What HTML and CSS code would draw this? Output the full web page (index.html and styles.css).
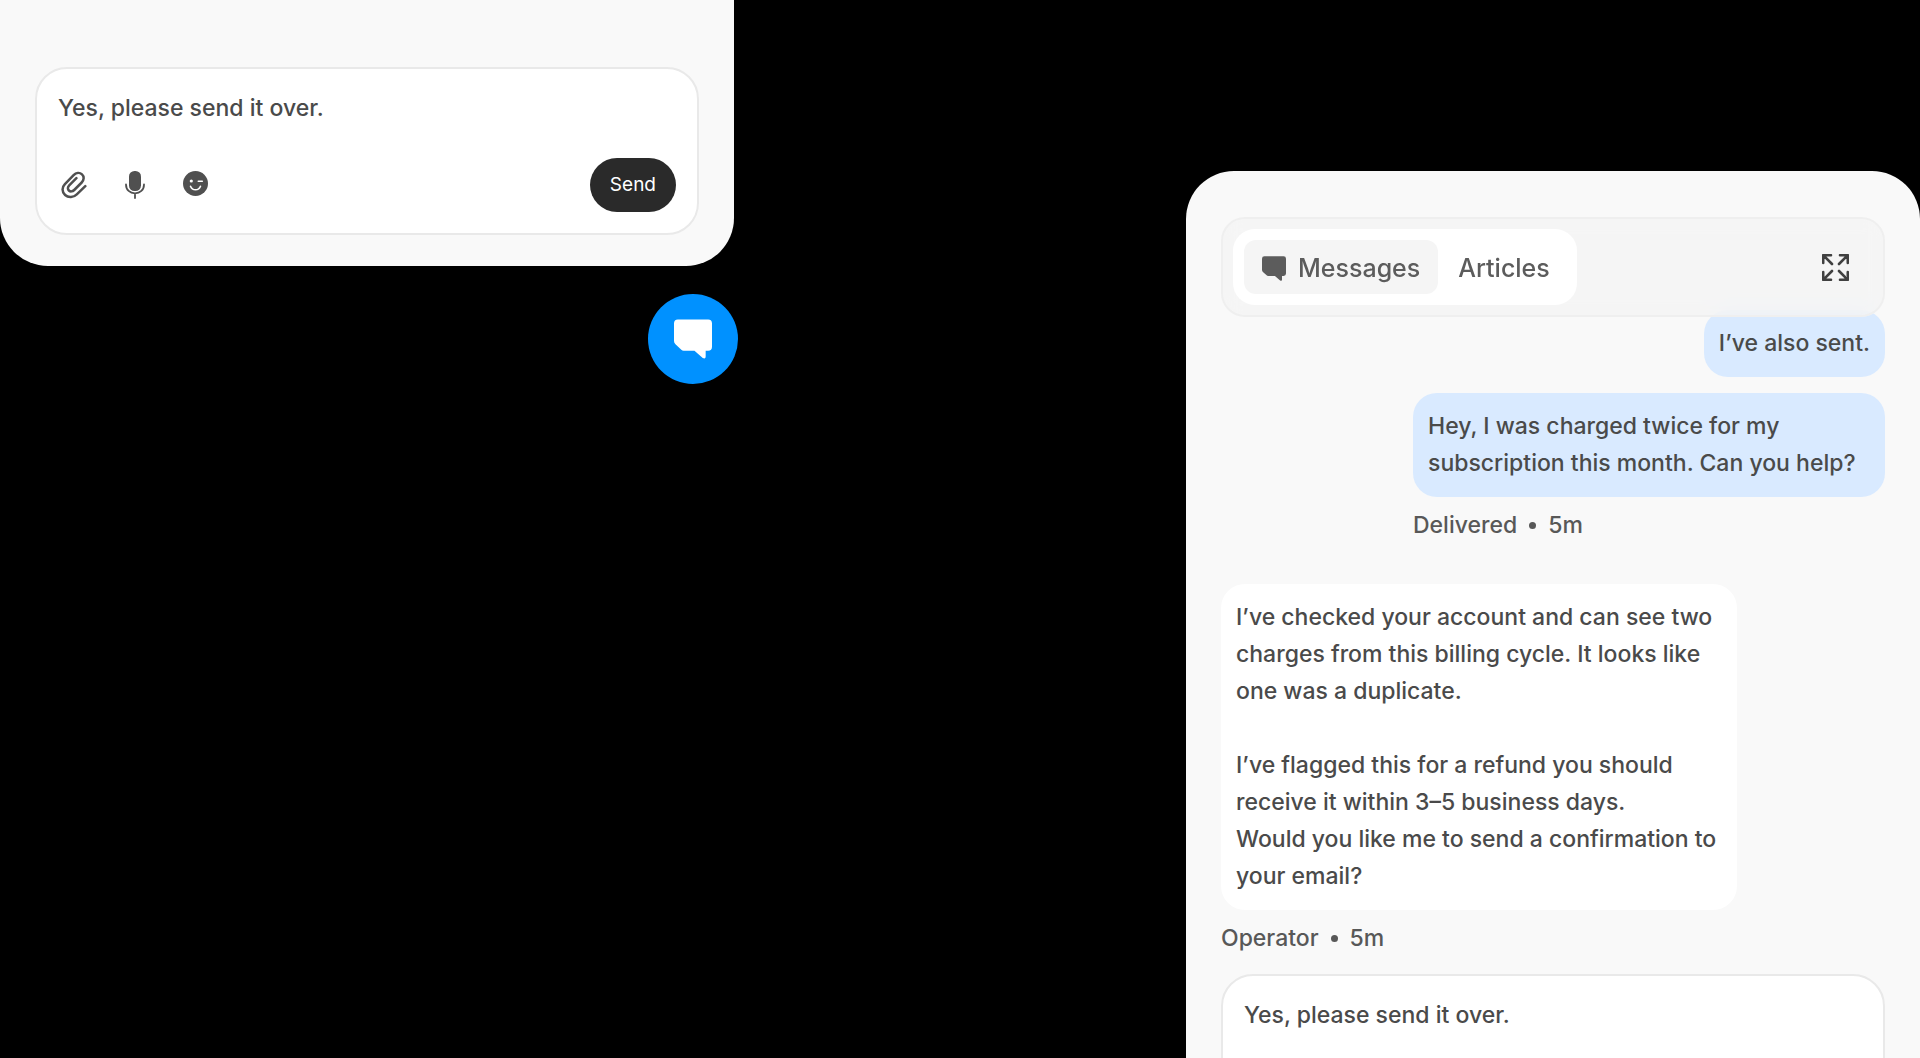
FILE: index.html
```html
<!DOCTYPE html>
<html lang="en">
<head>
<meta charset="utf-8">
<meta name="viewport" content="width=device-width, initial-scale=1">
<title>Support chat</title>
<link rel="stylesheet" href="styles.css">
</head>
<body>
<svg class="sprite" aria-hidden="true">
  <symbol id="icon-chat" viewBox="0 0 39 40"><path d="M4 0H35Q39 0 39 4V28Q39 32 35 32H32.500V38Q32.500 41 29.500 39.500L21 32H10Q8.500 32 7.500 31L1.500 25.500Q0 24 0 22V4Q0 0 4 0Z" fill="currentColor"/></symbol>
  <symbol id="icon-clip" viewBox="0 0 26 28"><path d="M24.300 15.200 15.800 23.400C12.500 26.600 7.500 27.200 4.100 24S.8 16.200 3.900 13.100L12.600 4.200C15 1.700 18.600 1.200 21 3.400S23 9.200 20.700 11.500L13.200 19C11.600 20.600 9.300 20.900 7.900 19.500S6.600 16 8.200 14.400L15.400 7.200" fill="none" stroke="currentColor" stroke-width="2.500" stroke-linecap="round" stroke-linejoin="round"/></symbol>
  <symbol id="icon-mic" viewBox="0 0 20 28"><rect x="4" y="0" width="12" height="20" rx="5.500" fill="currentColor"/><path d="M1 13.500C1 19 5 22.300 10 22.300S19 19 19 13.500M10 22.300V27" fill="none" stroke="currentColor" stroke-width="1.800" stroke-linecap="round"/></symbol>
  <symbol id="icon-smile" viewBox="0 0 25 25"><circle cx="12.500" cy="12.500" r="12.500" fill="currentColor"/><circle cx="8.300" cy="10" r="1.600" fill="#fff"/><path d="M15.300 10.200H19.300M7.500 15.200Q8.800 18.800 12.500 18.800T17.500 15.200" fill="none" stroke="#fff" stroke-width="1.600" stroke-linecap="round"/></symbol>
  <symbol id="icon-expand" viewBox="0 0 27 27"><path d="M1.200 9V1.200H9M1.200 1.200 10 10M18 1.200H25.800V9M25.800 1.200 17 10M1.200 18V25.800H9M1.200 25.800 10 17M25.800 18V25.800H18M25.800 25.800 17 17" fill="none" stroke="currentColor" stroke-width="2.600" stroke-linecap="round" stroke-linejoin="round"/></symbol>
</svg>

<main class="stage">
  <section class="column column-left">
    <div class="panel panel-bottom">
      <form class="composer">
        <textarea class="composer-input" rows="1" aria-label="Message">Yes, please send it over.</textarea>
        <div class="composer-bar">
          <div class="composer-tools">
            <button type="button" class="tool" aria-label="Attach file"><svg class="icon-clip"><use href="#icon-clip"/></svg></button>
            <button type="button" class="tool" aria-label="Record voice"><svg class="icon-mic"><use href="#icon-mic"/></svg></button>
            <button type="button" class="tool" aria-label="Add emoji"><svg class="icon-smile"><use href="#icon-smile"/></svg></button>
          </div>
          <button type="button" class="send">Send</button>
        </div>
      </form>
    </div>
    <button type="button" class="launcher" aria-label="Open chat"><svg class="launcher-icon"><use href="#icon-chat"/></svg></button>
  </section>

  <section class="column column-right">
    <div class="panel panel-top">
      <header class="chat-header">
        <nav class="tabs">
          <button type="button" class="tab tab-active"><svg class="tab-icon" aria-hidden="true"><use href="#icon-chat"/></svg>Messages</button>
          <button type="button" class="tab">Articles</button>
        </nav>
        <button type="button" class="expand" aria-label="Expand"><svg class="expand-icon"><use href="#icon-expand"/></svg></button>
      </header>
      <div class="thread">
        <p class="bubble bubble-sent">I’ve also sent.</p>
        <div class="message message-sent">
          <p class="bubble bubble-sent">Hey, I was charged twice for my<br>subscription this month. Can you help?</p>
          <p class="meta"><span>Delivered</span><span class="dot"></span><span>5m</span></p>
        </div>
        <div class="message message-received">
          <p class="bubble bubble-received">I’ve checked your account and can see two<br>charges from this billing cycle. It looks like<br>one was a duplicate.<br><br>I’ve flagged this for a refund you should<br>receive it within 3–5 business days.<br>Would you like me to send a confirmation to<br>your email?</p>
          <p class="meta"><span>Operator</span><span class="dot"></span><span>5m</span></p>
        </div>
      </div>
      <form class="composer">
        <textarea class="composer-input" rows="1" aria-label="Message">Yes, please send it over.</textarea>
      </form>
    </div>
  </section>
</main>
</body>
</html>
```
FILE: styles.css
```css
* { box-sizing: border-box; }

body {
  margin: 0;
  background: #000;
  color: #4a4a4a;
  font: 450 23px/37px Inter, "Liberation Sans", sans-serif;
}

p { margin: 0; }

button {
  border: 0;
  padding: 0;
  background: none;
  color: inherit;
  font: inherit;
  cursor: pointer;
}

svg { display: block; }

.sprite { display: none; }

.stage {
  display: flex;
  justify-content: space-between;
  align-items: flex-start;
  height: 100vh;
  overflow: hidden;
}

.column {
  display: flex;
  flex-direction: column;
  flex: 0 1 738px;
}

.column-left { align-items: flex-end; }

.column-right {
  flex-basis: 734px;
  padding-top: 171px;
}

.panel {
  background: #f9f9f9;
  padding-inline: 35px;
}

.panel-bottom {
  align-self: stretch;
  margin-right: 4px;
  padding-block: 67px 31px;
  border-radius: 0 0 48px 48px;
}

.panel-top {
  padding-block: 46px 31px;
  border-radius: 48px;
}

/* Composer */
.composer {
  display: flex;
  flex-direction: column;
  gap: 31px;
  min-height: 168px;
  padding: 21px 21px 20px;
  border: 2px solid #e9e9e9;
  border-radius: 32px;
  background: #fff;
}

.composer-input {
  display: block;
  width: 100%;
  height: 37px;
  padding: 0;
  border: 0;
  outline: 0;
  background: transparent;
  color: inherit;
  font: inherit;
  resize: none;
  overflow: hidden;
}

.composer-bar {
  display: flex;
  justify-content: space-between;
  align-items: center;
}

.composer-tools {
  display: flex;
  align-items: flex-start;
  gap: 38px;
  padding-left: 3px;
  color: #505050;
}

.icon-clip { width: 26px; height: 28px; }
.icon-mic { width: 20px; height: 28px; }
.icon-smile { width: 25px; height: 25px; }

.send {
  padding: 9px 20px;
  border-radius: 27px;
  background: #2a2a2a;
  color: #fff;
  font-size: 19px;
  font-weight: 400;
  line-height: 36px;
}

.launcher {
  display: grid;
  place-items: center;
  width: 90px;
  height: 90px;
  margin-top: 28px;
  border-radius: 50%;
  background: #0091ff;
  color: #fff;
}

.launcher-icon { width: 38px; height: 40px; }

/* Header */
.chat-header {
  position: relative;
  z-index: 1;
  display: flex;
  justify-content: space-between;
  align-items: center;
  padding: 10px 34px 10px 10px;
  border: 2px solid #efefef;
  border-radius: 24px;
  background: rgba(244, 244, 244, 0.7);
  backdrop-filter: blur(10px);
}

.tabs {
  display: flex;
  gap: 2px;
  padding: 11px 9px 11px 11px;
  border-radius: 22px;
  background: #fff;
  color: #5c5c5c;
}

.tab {
  display: flex;
  align-items: center;
  gap: 12px;
  padding: 9px 18px 7px;
  border-radius: 12px;
  font-size: 25px;
  font-weight: 500;
  line-height: 38px;
}

.tab-active { background: #f5f5f5; }

.tab-icon { width: 24px; height: 25px; }

.expand { color: #404040; }

.expand-icon { width: 27px; height: 27px; }

/* Conversation */
.thread {
  display: flex;
  flex-direction: column;
  margin: -7px 0 17px;
}

.bubble {
  padding: 15px;
  border-radius: 24px;
}

.bubble-sent {
  align-self: flex-end;
  background: #d9eaff;
}

.bubble-received { background: #fff; }

.message {
  display: flex;
  flex-direction: column;
  gap: 10px;
  max-width: 100%;
}

.message .bubble { align-self: stretch; }

.message-sent {
  align-self: flex-end;
  width: 472px;
  margin: 16px 0 40px;
}

.message-received { width: 516px; }

.meta {
  display: flex;
  align-items: center;
  gap: 12px;
  color: #585858;
}

.dot {
  width: 7px;
  height: 7px;
  border-radius: 50%;
  background: currentColor;
}
```
